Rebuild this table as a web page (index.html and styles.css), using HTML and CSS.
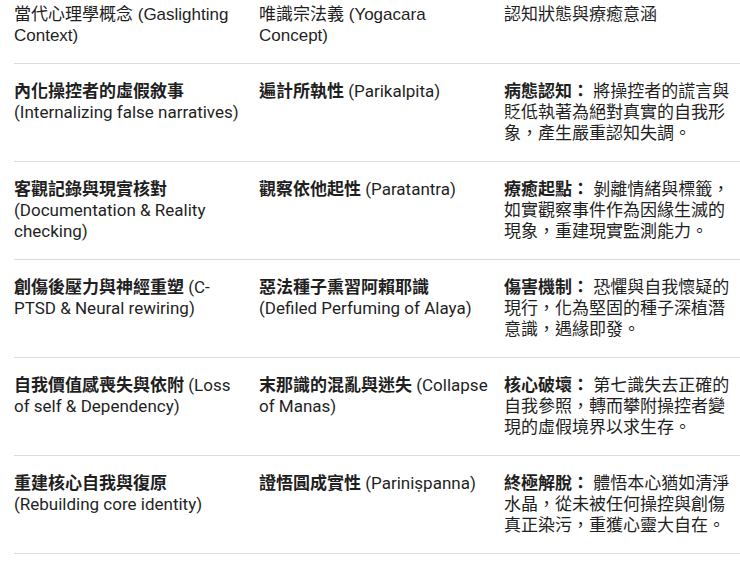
FILE: index.html
```html
<!DOCTYPE html>
<html lang="zh-Hant">
<head>
<meta charset="utf-8">
<link rel="stylesheet" href="styles.css">
</head>
<body>
<table class="grid">
  <colgroup><col class="c"><col class="c"><col class="c"></colgroup>
  <thead>
    <tr>
      <th>當代心理學概念 (Gaslighting Context)</th>
      <th>唯識宗法義 (Yogacara Concept)</th>
      <th>認知狀態與療癒意涵</th>
    </tr>
  </thead>
  <tbody>
    <tr>
      <td><b>內化操控者的虛假敘事</b> (Internalizing false narratives)</td>
      <td><b>遍計所執性</b> (Parikalpita)</td>
      <td><b>病態認知：</b> 將操控者的謊言與貶低執著為絕對真實的自我形象，產生嚴重認知失調。</td>
    </tr>
    <tr>
      <td><b>客觀記錄與現實核對</b> (Documentation &amp; Reality checking)</td>
      <td><b>觀察依他起性</b> (Paratantra)</td>
      <td><b>療癒起點：</b> 剝離情緒與標籤，如實觀察事件作為因緣生滅的現象，重建現實監測能力。</td>
    </tr>
    <tr>
      <td><b>創傷後壓力與神經重塑</b> (C-PTSD &amp; Neural rewiring)</td>
      <td><b>惡法種子熏習阿賴耶識</b> (Defiled Perfuming of Alaya)</td>
      <td><b>傷害機制：</b> 恐懼與自我懷疑的現行，化為堅固的種子深植潛意識，遇緣即發。</td>
    </tr>
    <tr>
      <td><b>自我價值感喪失與依附</b> (Loss of self &amp; Dependency)</td>
      <td><b>末那識的混亂與迷失</b> (Collapse of Manas)</td>
      <td><b>核心破壞：</b> 第七識失去正確的自我參照，轉而攀附操控者變現的虛假境界以求生存。</td>
    </tr>
    <tr>
      <td><b>重建核心自我與復原</b> (Rebuilding core identity)</td>
      <td><b>證悟圓成實性</b> (Pariniṣpanna)</td>
      <td><b>終極解脫：</b> 體悟本心猶如清淨水晶，從未被任何操控與創傷真正染污，重獲心靈大自在。</td>
    </tr>
  </tbody>
</table>
</body>
</html>
```
FILE: styles.css
```css
html, body {
  margin: 0;
  padding: 0;
  background: #ffffff;
  overflow: hidden;
}
body {
  color: #1f1f1f;
  font-family: Roboto, "Noto Sans CJK TC", sans-serif;
  font-size: 17px;
  line-height: 21px;
}
.grid {
  margin-left: 14px;
  width: 735px;
  border-collapse: collapse;
  table-layout: fixed;
}
.c {
  width: 245px;
}
.grid th,
.grid td {
  text-align: left;
  vertical-align: top;
  padding: 17px 13px 17px 0;
  border-bottom: 1px solid #dcdcdc;
}
.grid th {
  font-family: "Liberation Sans", "Noto Sans CJK TC", sans-serif;
  font-weight: normal;
  padding-top: 4px;
}
.grid b {
  font-weight: 700;
}
```
